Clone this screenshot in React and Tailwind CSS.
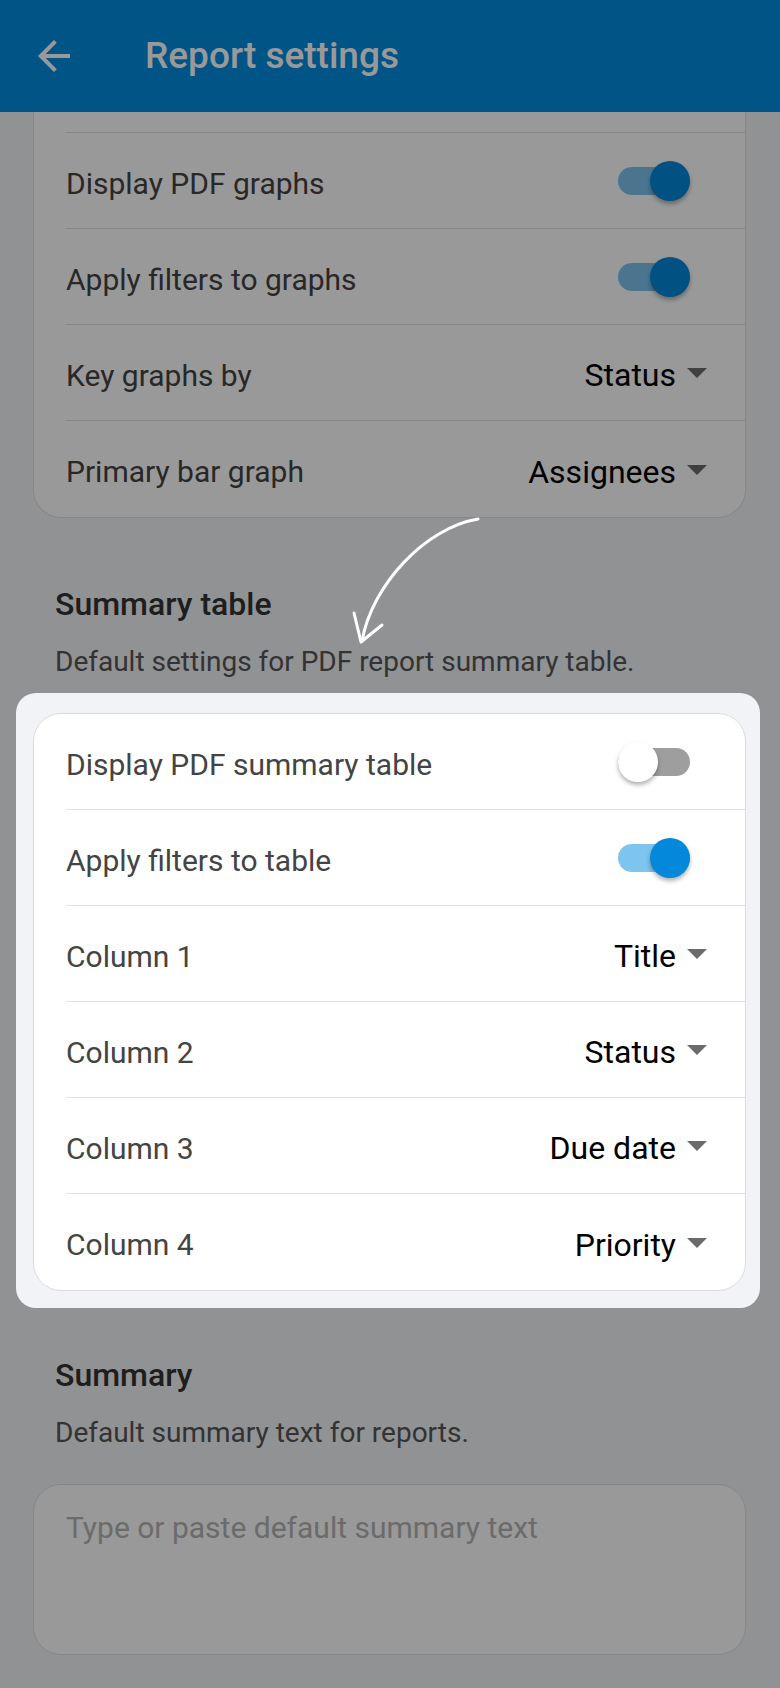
import React from 'react';

const topRows = [
  { label: 'Display PDF graphs', on: true },
  { label: 'Apply filters to graphs', on: true },
  { label: 'Key graphs by', value: 'Status' },
  { label: 'Primary bar graph', value: 'Assignees' },
];

const tableRows = [
  { label: 'Display PDF summary table', on: false },
  { label: 'Apply filters to table', on: true },
  { label: 'Column 1', value: 'Title' },
  { label: 'Column 2', value: 'Status' },
  { label: 'Column 3', value: 'Due date' },
  { label: 'Column 4', value: 'Priority' },
];

const Toggle = ({ on }) => (
  <div className="relative mr-[17px] h-[40px] w-[72px] flex items-center">
    <div className={`h-[28px] w-[72px] rounded-full ${on ? 'bg-[#7dc4ee]' : 'bg-[#9e9e9e]'}`} />
    <div
      className={`absolute top-0 size-[40px] rounded-full shadow-[0_3px_4px_rgba(0,0,0,0.3)] ${
        on ? 'right-0 bg-[#0388db]' : 'left-0 bg-white'
      }`}
    />
  </div>
);

const Dropdown = ({ value }) => (
  <div className="flex items-center gap-[11px] pt-[5px]">
    <span className="text-[32px] text-black">{value}</span>
    <svg width="20" height="10" viewBox="0 0 20 10" className="mt-[-4px]">
      <path d="M0 0h20L10 10z" fill="#6b6b6b" />
    </svg>
  </div>
);

const Row = ({ row, last }) => (
  <div
    className={`ml-[32px] h-[96px] pr-[38px] flex items-center justify-between ${
      last ? '' : 'border-b border-[#e0e0e0]'
    }`}
  >
    <span className="pt-[5px] text-[30px] text-[#444]">{row.label}</span>
    {row.value ? <Dropdown value={row.value} /> : <Toggle on={row.on} />}
  </div>
);

const SectionHead = ({ title, text, top }) => (
  <div className={`pl-[55px] ${top}`}>
    <h2 className="text-[32px] leading-[36px] font-medium text-[#333]">{title}</h2>
    <p className="mt-[20px] text-[28px] leading-[40px] text-[#555]">{text}</p>
  </div>
);

export default function App() {
  return (
    <div className="relative min-h-screen bg-[#f2f3f7] [font-family:Roboto,'Liberation_Sans',sans-serif] pb-[30px]">
      {/* app bar */}
      <header className="h-[112px] bg-[#008ddf] flex items-center pl-[30px]">
        <svg width="48" height="48" viewBox="0 0 24 24">
          <path d="M20 11H7.83l5.59-5.59L12 4l-8 8 8 8 1.41-1.41L7.83 13H20v-2z" fill="#fff" />
        </svg>
        <h1 className="ml-[67px] text-[37px] font-medium text-white">Report settings</h1>
      </header>

      {/* graphs card, scrolled under the bar */}
      <div className="ml-[33px] mr-[34px] bg-white border-x border-b border-[#e0e0e0] rounded-b-[28px]">
        <div className="ml-[32px] h-[21px] border-b border-[#e0e0e0]" />
        {topRows.map((r, i) => (
          <Row key={r.label} row={r} last={i === topRows.length - 1} />
        ))}
      </div>

      <SectionHead
        top="mt-[68px]"
        title="Summary table"
        text="Default settings for PDF report summary table."
      />

      {/* highlighted card, above the scrim */}
      <div className="relative z-20 ml-[33px] mr-[34px] mt-[31px]">
        <div className="absolute -left-[17px] -right-[14px] -top-[20px] -bottom-[17px] rounded-[20px] bg-[#f2f3f7]" />
        <div className="relative bg-white border border-[#dcdcdc] rounded-[28px]">
          {tableRows.map((r, i) => (
            <Row key={r.label} row={r} last={i === tableRows.length - 1} />
          ))}
        </div>
      </div>

      <SectionHead top="mt-[66px]" title="Summary" text="Default summary text for reports." />

      <div className="ml-[33px] mr-[34px] mt-[31px]">
        <textarea
          readOnly
          placeholder="Type or paste default summary text"
          className="block w-full h-[171px] resize-none rounded-[28px] border border-[#e0e0e0] bg-white px-[32px] pt-[25px] text-[30px] leading-[36px] text-[#333] placeholder:text-[#b3b3b3] outline-none"
        />
      </div>

      {/* scrim */}
      <div className="absolute inset-0 z-10 bg-black/40" />

      {/* hand-drawn pointer */}
      <svg
        className="absolute left-[340px] top-[505px] z-20 pointer-events-none"
        width="150"
        height="145"
        viewBox="340 505 150 145"
        fill="none"
        stroke="#fff"
        strokeWidth="3"
        strokeLinecap="round"
        strokeLinejoin="round"
      >
        <path d="M478 519C425 528 372 585 362 641" />
        <path d="M354 613L361 642L382 625" />
      </svg>
    </div>
  );
}
